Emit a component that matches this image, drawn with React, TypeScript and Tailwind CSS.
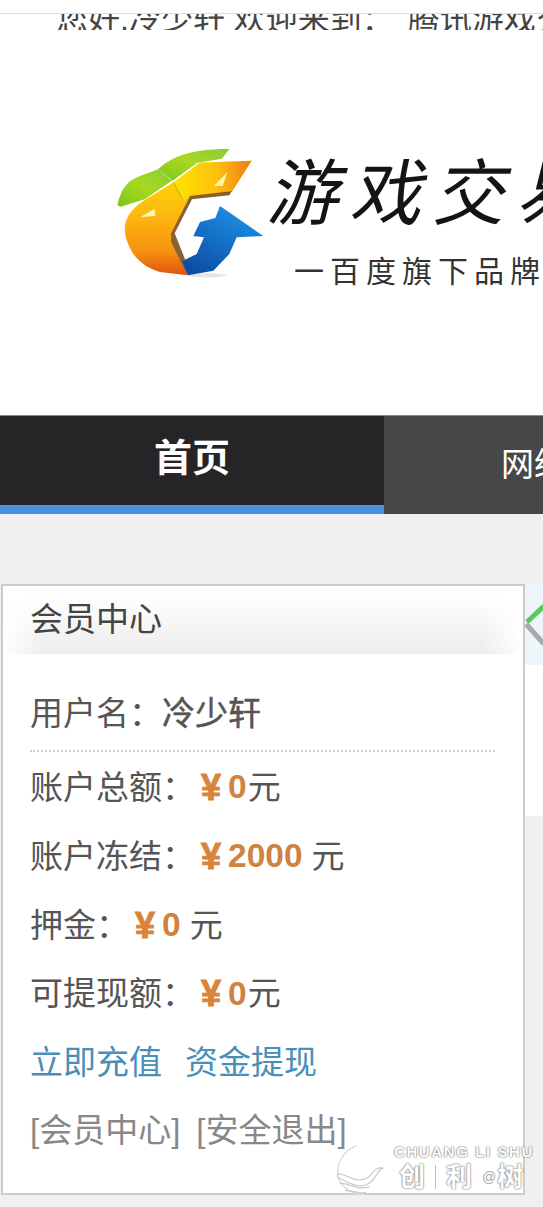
const cjk = "font-['Liberation_Sans','Noto_Sans_CJK_SC',sans-serif]";

function GameLogo() {
  return (
    <svg viewBox="0 0 540 480" className="h-[160px] w-[180px] shrink-0 blur-[0.6px]">
      <defs>
        <linearGradient id="body" x1="0" y1="0" x2="0" y2="1">
          <stop offset="0" stopColor="#ffe000" />
          <stop offset="0.45" stopColor="#fdbb10" />
          <stop offset="0.8" stopColor="#f69010" />
          <stop offset="1" stopColor="#e2500c" />
        </linearGradient>
        <linearGradient id="arm" x1="0" y1="0" x2="1" y2="0">
          <stop offset="0" stopColor="#fde400" />
          <stop offset="0.55" stopColor="#fdc010" />
          <stop offset="1" stopColor="#ee7c10" />
        </linearGradient>
        <linearGradient id="arrow" x1="0.7" y1="0.2" x2="0.2" y2="1">
          <stop offset="0" stopColor="#1a86dc" />
          <stop offset="1" stopColor="#0d4ca0" />
        </linearGradient>
        <linearGradient id="leaf" x1="0" y1="1" x2="1" y2="0">
          <stop offset="0" stopColor="#7cc51c" />
          <stop offset="0.5" stopColor="#a8d820" />
          <stop offset="1" stopColor="#8ccb38" />
        </linearGradient>
      </defs>
      <ellipse cx="320" cy="436" rx="60" ry="6" fill="#e4e4e4" />
      <path d="M52 226 C60 190 72 168 92 152 C120 136 150 128 174 118 L216 152 L134 208 L62 230 Z" fill="url(#leaf)" />
      <path d="M174 118 C200 92 240 74 280 66 C320 58 360 56 388 57 L366 86 L292 98 L218 152 Z" fill="url(#leaf)" />
      <path d="M222 156 L134 210 C104 230 84 250 76 280 C70 305 80 340 100 372 C120 400 150 418 180 426 L262 436 L216 336 L216 310 L270 200 L395 186 L455 92 L300 98 Z" fill="url(#body)" />
      <path d="M222 156 L300 98 L455 92 L395 186 L270 200 L248 214 Z" fill="url(#arm)" />
      <path d="M220 158 L250 212" stroke="#c8a020" strokeWidth="3" fill="none" />
      <path d="M270 198 L395 184 L388 196 L276 208 L224 310 L268 420 L262 436 L214 336 L214 310 Z" fill="#6a3a0a" opacity="0.8" />
      <path d="M360 228 L490 318 L410 322 L388 372 L340 422 L264 436 L246 394 L290 372 L312 322 L280 318 L300 276 L346 264 Z" fill="url(#arrow)" />
      <path d="M120 262 L164 236 L166 258 Z" fill="#fff3b0" />
      <path d="M342 168 L382 126 L368 168 Z" fill="#fff3b0" />
    </svg>
  );
}

function Watermark() {
  return (
    <div className="absolute left-[336px] top-[1142px] flex items-start gap-[2px]">
      <svg viewBox="0 0 60 56" className="h-[56px] w-[56px]">
        <path d="M22 2 C6 8 0 24 2 34 C4 46 16 54 30 54" fill="none" stroke="#dcdcdc" strokeWidth="1.5" />
        <path d="M2 32 C12 32 22 44 34 36 C40 32 42 24 50 26 C44 28 44 36 36 42 C24 50 12 40 2 36 Z" fill="#ffffff" stroke="#c8c8c8" strokeWidth="1.2" />
        <path d="M4 42 C14 42 22 50 36 46 M10 50 C18 50 24 54 32 52" fill="none" stroke="#cccccc" strokeWidth="1.5" />
      </svg>
      <div className="flex flex-col pt-[1px] text-white [text-shadow:0_0_2px_#666666,0_0_1px_#777777]">
        <span className="text-[15px] leading-[18px] font-bold tracking-[1.6px] whitespace-nowrap">CHUANG LI SHU</span>
        <span className="flex items-center gap-[10px] pl-[5px] text-[26px] leading-[32px] font-bold whitespace-nowrap">
          <span>创</span>
          <span className="h-[24px] w-px bg-[#c0c0c0]" />
          <span>利</span>
          <span className="text-[14px] font-normal text-[#aaaaaa] [text-shadow:none]">@</span>
          <span className="-ml-[9px]">树</span>
        </span>
      </div>
    </div>
  );
}

function Money({ value, gap }: { value: string; gap?: boolean }) {
  return (
    <>
      <span className="ml-[6px] mr-[7px] text-[36px] leading-none font-bold text-[#d9843a] [-webkit-text-stroke:1px_#d9843a]">¥</span>
      <span className="text-[33.5px] font-bold text-[#d08240]">{value}</span>
      <span className={gap ? 'ml-[9px]' : 'ml-[1px]'}>元</span>
    </>
  );
}

const rows = [
  { label: '账户总额：', value: '0', gap: false, height: 'h-[69px]' },
  { label: '账户冻结：', value: '2000', gap: true, height: 'h-[69px]' },
  { label: '押金：', value: '0', gap: true, height: 'h-[69px]' },
  { label: '可提现额：', value: '0', gap: false, height: 'h-[68px]' },
];

export default function App() {
  return (
    <div className={`relative flex h-[1207px] w-[543px] flex-col overflow-hidden bg-white ${cjk}`}>
      {/* cut off status strip */}
      <div className="h-[14px] shrink-0 border-b border-[#dddddd] bg-white" />
      <div className="flex h-[16px] shrink-0 items-end overflow-hidden pl-[56px] text-[32px] leading-[38px] whitespace-nowrap text-[#444444]">
        <span className="-mb-[8px]">您好,冷少轩 欢迎来到：<span className="ml-[5px]"> 腾讯游戏交易</span></span>
      </div>

      {/* logo */}
      <div className="flex h-[385px] shrink-0 items-start overflow-hidden pl-[100px] pt-[100px] whitespace-nowrap">
        <GameLogo />
        <div className="-ml-[14px] flex flex-col pt-[24px] text-[#141414]">
          <span className="text-[72px] leading-[80px] tracking-[11px] italic">游戏交易</span>
          <span className="ml-[28px] mt-[19px] text-[30px] leading-[38px] tracking-[6px] text-[#333333]">一百度旗下品牌</span>
        </div>
      </div>

      {/* nav */}
      <div className="flex h-[99px] shrink-0 border-t border-[#888888] bg-[#474649] whitespace-nowrap">
        <div className="flex w-[384px] shrink-0 flex-col border-b-[9px] border-[#4a90e2] bg-[#252527] text-center">
          <span className="pt-[19px] text-[38px] leading-[46px] font-bold text-white">首页</span>
        </div>
        <span className="pl-[117px] pt-[29px] text-[33px] leading-[40px] text-white">网络游戏</span>
      </div>

      <div className="h-[70px] shrink-0 bg-[#f0f0f0]" />

      {/* member panel */}
      <div className="flex flex-1 items-stretch bg-[#f0f0f0]">
        <div className="ml-[1px] h-[611px] w-[524px] shrink-0 border-2 border-[#cccccc] bg-white text-[33px] text-[#555555]">
          <div className="flex h-[68px] items-center bg-[linear-gradient(to_bottom,#ffffff_15%,rgba(255,255,255,0)_100%),linear-gradient(to_right,#ffffff,#ececec_8%,#ececec_92%,#ffffff)] pl-[27px] text-[#444444]">会员中心</div>
          <div className="flex h-[99px] flex-col px-[28px]">
            <div className="-ml-[1px] flex h-[98px] items-center border-b-2 border-dotted border-[#cfcfcf] pt-[24px]">
              <span>用户名：</span>
              <span className="[-webkit-text-stroke:0.5px_#555555]">冷少轩</span>
            </div>
          </div>
          {rows.map((row) => (
            <div key={row.label} className={`flex items-center whitespace-pre pl-[27px] ${row.height}`}>
              <span>{row.label}</span>
              <Money value={row.value} gap={row.gap} />
            </div>
          ))}
          <div className="flex h-[69px] items-center gap-[23px] pl-[27px] text-[#4a8fb8]">
            <span>立即充值</span>
            <span>资金提现</span>
          </div>
          <div className="flex h-[68px] items-center gap-[16px] pl-[27px] text-[#888888]">
            <span>[会员中心]</span>
            <span>[安全退出]</span>
          </div>
        </div>

        {/* edge of the next panel */}
        <div className="flex h-[232px] flex-1 flex-col bg-white">
          <div className="h-[81px] overflow-hidden bg-[#eef6fb]">
            <svg viewBox="0 0 19 60" className="mt-[18px] h-[60px] w-[19px] blur-[0.6px]">
              <path d="M2 20 L19 4" stroke="#5cc85c" strokeWidth="5" fill="none" />
              <path d="M1 22 L19 42" stroke="#a8aca8" strokeWidth="5" fill="none" />
            </svg>
          </div>
        </div>
      </div>

      <Watermark />
    </div>
  );
}
